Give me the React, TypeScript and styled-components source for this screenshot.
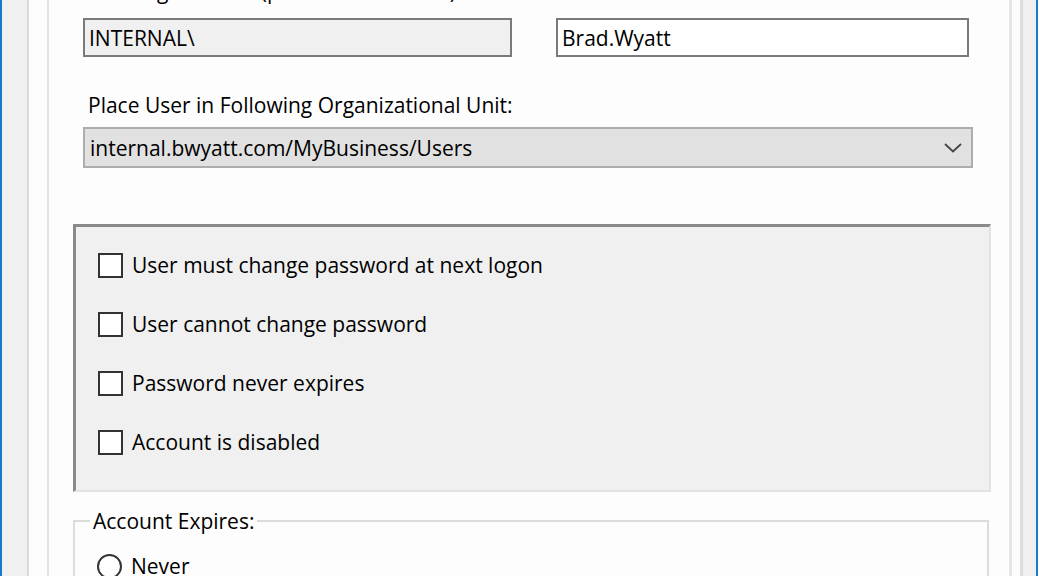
import React from "react";
import styled, { createGlobalStyle } from "styled-components";

const Global = createGlobalStyle`
  html, body { margin: 0; padding: 0; overflow: hidden; }
  body { width: 1038px; height: 576px; background: #f0f0f0; }
  #root { height: 576px; }
`;

const Window = styled.div`
  box-sizing: border-box;
  width: 1038px;
  height: 576px;
  overflow: hidden;
  background: #f0f0f0;
  border-left: 2px solid #1979ca;
  border-right: 2px solid #1979ca;
  padding: 0 13px 0 25px;
  display: flex;
  font-family: "Open Sans", "Noto Sans", sans-serif;
  font-size: 21px;
  color: #000;
`;

const Page = styled.div`
  flex: 1;
  display: flex;
  background: #fdfdfd;
  border-left: 2px solid #dadada;
  border-right: 3px solid #dedede;
  padding: 0 8px 0 18px;
`;

const Inner = styled.div`
  flex: 1;
  display: flex;
  flex-direction: column;
  border-left: 2px solid #e3e3e3;
  border-right: 3px solid #e6e6e6;
  padding: 0 15px 0 24px;
`;

const Form = styled.div`
  display: flex;
  flex-direction: column;
  margin-top: -22px;
`;

const Label = styled.div<{ $top?: number }>`
  margin-left: 15px;
  line-height: 26px;
  height: 26px;
  white-space: nowrap;
  margin-top: ${(p) => p.$top ?? 0}px;
`;

const FieldRow = styled.div`
  display: flex;
  gap: 44px;
  margin-left: 10px;
  margin-top: 14px;
`;

const TextBox = styled.div<{ $w: number; $disabled?: boolean }>`
  box-sizing: border-box;
  width: ${(p) => p.$w}px;
  height: 39px;
  border: 2px solid #7a7a7a;
  background: ${(p) => (p.$disabled ? "#f0f0f0" : "#ffffff")};
  padding-left: 4px;
  display: flex;
  align-items: center;
  white-space: nowrap;
`;

const Select = styled.div`
  box-sizing: border-box;
  margin-left: 10px;
  margin-top: 9px;
  width: 890px;
  height: 41px;
  border: 2px solid #adadad;
  background: #e1e1e1;
  padding: 0 9px 0 5px;
  display: flex;
  align-items: center;
  justify-content: space-between;
  white-space: nowrap;
`;

const OptionsPanel = styled.div`
  box-sizing: border-box;
  margin-top: 56px;
  width: 918px;
  height: 268px;
  background: #f0f0f0;
  border-style: solid;
  border-width: 3px 2px 2px 3px;
  border-color: #8a8a8a #e3e3e3 #e3e3e3 #8a8a8a;
  padding: 26px 0 0 22px;
  display: flex;
  flex-direction: column;
  gap: 35px;
`;

const CheckRow = styled.label`
  display: flex;
  align-items: center;
  gap: 9px;
  height: 24px;
  white-space: nowrap;
`;

const Box = styled.span`
  box-sizing: border-box;
  width: 25px;
  height: 25px;
  border: 2px solid #333333;
  background: #ffffff;
  flex: none;
`;

const GroupBox = styled.fieldset`
  box-sizing: border-box;
  margin: 16px 0 0 0;
  width: 916px;
  height: 120px;
  border: 2px solid #dcdcdc;
  padding: 0 0 0 22px;
  min-width: 0;
`;

const Legend = styled.legend`
  padding: 0 3px;
  margin-left: -7px;
  line-height: 26px;
`;

const RadioRow = styled.label`
  display: flex;
  align-items: center;
  gap: 9px;
  margin-top: 18px;
  white-space: nowrap;
`;

const Radio = styled.span`
  box-sizing: border-box;
  width: 25px;
  height: 25px;
  border-radius: 50%;
  border: 2px solid #333333;
  background: #ffffff;
  flex: none;
`;

const Chevron = () => (
  <svg width="18" height="10" viewBox="0 0 18 10">
    <path d="M1 1 L9 8.5 L17 1" fill="none" stroke="#444" strokeWidth="1.8" />
  </svg>
);

const options = [
  "User must change password at next logon",
  "User cannot change password",
  "Password never expires",
  "Account is disabled",
];

export default function App() {
  return (
    <>
      <Global />
      <Window>
        <Page>
          <Inner>
            <Form>
              <Label>User logon name (pre-Windows 2000):</Label>
              <FieldRow>
                <TextBox $w={429} $disabled>INTERNAL\</TextBox>
                <TextBox $w={413}>Brad.Wyatt</TextBox>
              </FieldRow>
              <Label $top={35}>Place User in Following Organizational Unit:</Label>
              <Select>
                <span>internal.bwyatt.com/MyBusiness/Users</span>
                <Chevron />
              </Select>
              <OptionsPanel>
                {options.map((o) => (
                  <CheckRow key={o}>
                    <Box />
                    <span>{o}</span>
                  </CheckRow>
                ))}
              </OptionsPanel>
              <GroupBox>
                <Legend>Account Expires:</Legend>
                <RadioRow>
                  <Radio />
                  <span>Never</span>
                </RadioRow>
              </GroupBox>
            </Form>
          </Inner>
        </Page>
      </Window>
    </>
  );
}
